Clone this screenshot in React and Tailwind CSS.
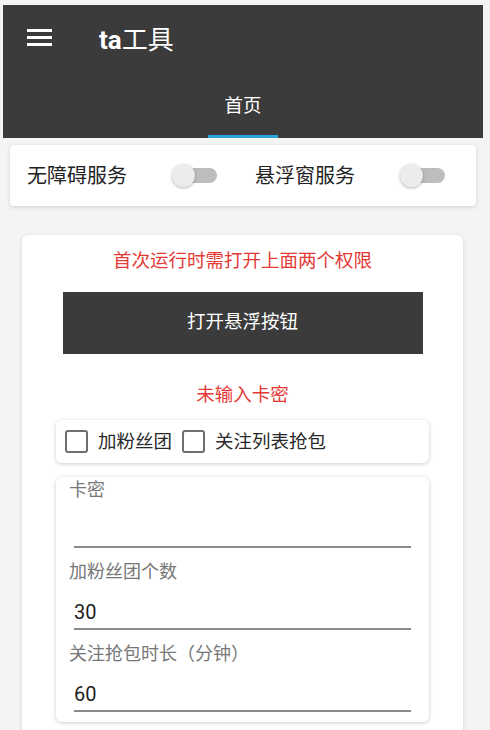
import { useState } from 'react';

const font = { fontFamily: "Roboto, 'Noto Sans CJK SC', 'Noto Sans', sans-serif" };

function Switch() {
  return (
    <div className="relative flex h-[24px] w-[45px] items-center">
      <div className="ml-[10px] h-[15px] w-[35px] rounded-full bg-[#bdbdbd]" />
      <div className="absolute left-0 top-0 h-[23px] w-[23px] rounded-full bg-[#ececec] shadow-[0_1px_3px_rgba(0,0,0,0.3)]" />
    </div>
  );
}

function CheckItem({ label, checked, onToggle }) {
  return (
    <button type="button" onClick={onToggle} className="flex items-center">
      <span className="flex h-[23px] w-[23px] items-center justify-center rounded-[3px] border-[2.5px] border-[#6f6f6f]">
        {checked ? <span className="h-[12px] w-[12px] bg-[#6f6f6f]" /> : null}
      </span>
      <span className="ml-[10px] text-[18.5px] leading-[24px] text-[#2a2a2a]">{label}</span>
    </button>
  );
}

function Field({ label, value }) {
  return (
    <div className="flex flex-col">
      <span className="ml-[13px] h-[24px] text-[18px] leading-[24px] text-[#777777]">{label}</span>
      <div className="ml-[18px] mr-[18px] flex h-[46px] items-end border-b-2 border-[#8a8a8a] pb-[4px]">
        <span className="text-[20px] leading-[24px] text-[#1e1e1e]">{value}</span>
      </div>
    </div>
  );
}

export default function App() {
  const [fans, setFans] = useState(false);
  const [follow, setFollow] = useState(false);

  return (
    <div style={font} className="h-[730px] w-[490px] overflow-hidden bg-[#f4f4f4] pt-[5px]">
      <header className="ml-[3px] flex h-[133px] w-[480px] flex-col bg-[#3b3b3b]">
        <div className="flex h-[64px] items-center pl-[24px]">
          <div className="flex w-[25px] flex-col gap-[4px]">
            <span className="h-[3px] w-full bg-white" />
            <span className="h-[3px] w-full bg-white" />
            <span className="h-[3px] w-full bg-white" />
          </div>
          <h1 className="ml-[47px] mt-[6px] text-[26px] leading-[32px] text-white">
            <span className="font-bold">ta</span>工具
          </h1>
        </div>
        <div className="flex h-[69px] justify-center">
          <div className="flex w-[70px] flex-col">
            <span className="flex flex-1 items-center justify-center pt-[10px] text-[18.5px] text-white">首页</span>
            <span className="h-[3px] w-full bg-[#2aa6d9]" />
          </div>
        </div>
      </header>

      <section className="ml-[10px] mt-[7px] flex h-[61px] w-[466px] items-center rounded-[4px] bg-white pl-[17px] shadow-[0_1px_4px_rgba(0,0,0,0.15)]">
        <span className="w-[145px] text-[20px] text-[#222222]">无障碍服务</span>
        <Switch />
        <span className="ml-[38px] w-[145px] text-[20px] text-[#222222]">悬浮窗服务</span>
        <Switch />
      </section>

      <section className="ml-[22px] mt-[29px] flex h-[520px] w-[441px] flex-col items-center rounded-[6px] bg-white shadow-[0_1px_4px_rgba(0,0,0,0.15)]">
        <p className="pt-[14px] text-[18.5px] leading-[24px] text-[#e53935]">首次运行时需打开上面两个权限</p>
        <button type="button" className="mt-[19px] h-[62px] w-[360px] bg-[#3b3b3b] text-[18.5px] text-white">
          打开悬浮按钮
        </button>
        <p className="mt-[29px] text-[18.5px] leading-[24px] text-[#e53935]">未输入卡密</p>

        <div className="mt-[13px] flex h-[43px] w-[373px] items-center gap-[10px] rounded-[6px] bg-white pl-[9px] shadow-[0_1px_4px_rgba(0,0,0,0.2)]">
          <CheckItem label="加粉丝团" checked={fans} onToggle={() => setFans(!fans)} />
          <CheckItem label="关注列表抢包" checked={follow} onToggle={() => setFollow(!follow)} />
        </div>

        <div className="mt-[14px] flex w-[373px] flex-col gap-[12px] rounded-[6px] bg-white pb-[10px] pt-[1px] shadow-[0_1px_4px_rgba(0,0,0,0.2)]">
          <Field label="卡密" value="" />
          <Field label="加粉丝团个数" value="30" />
          <Field label="关注抢包时长（分钟）" value="60" />
        </div>
      </section>
    </div>
  );
}
